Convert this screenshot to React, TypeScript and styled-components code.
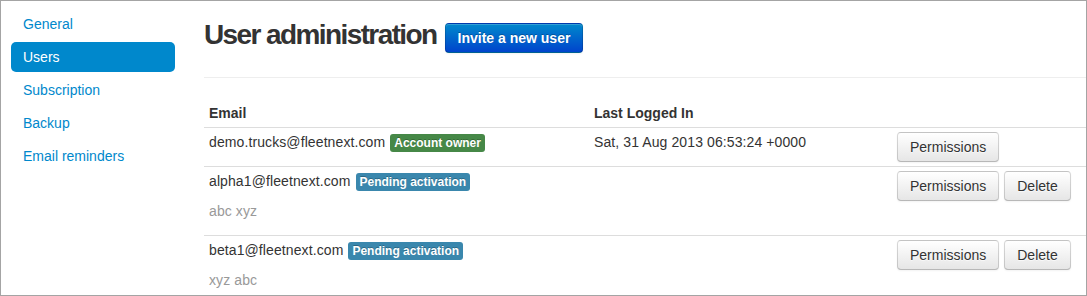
import React from 'react'
import styled, { createGlobalStyle } from 'styled-components'

const GlobalStyle = createGlobalStyle`
  body {
    margin: 0;
    background: #fff;
    font-family: "Liberation Sans", Arial, sans-serif;
    font-size: 14px;
    line-height: 20px;
    color: #333;
  }
`

const Frame = styled.div`
  width: 1087px;
  height: 296px;
  box-sizing: border-box;
  border: 1px solid #a4a4a4;
  overflow: hidden;
  display: flex;
  align-items: flex-start;
`

const Sidebar = styled.ul`
  list-style: none;
  margin: 8px 0 0 10px;
  padding: 0;
  width: 164px;
  flex-shrink: 0;
`

const NavLink = styled.a<{ $active?: boolean }>`
  display: block;
  margin-bottom: 3px;
  padding: 5px 12px;
  border-radius: 5px;
  text-decoration: none;
  color: ${p => (p.$active ? '#fff' : '#0088cc')};
  background: ${p => (p.$active ? '#0088cc' : 'transparent')};
`

const Main = styled.main`
  flex: 1;
  min-width: 0;
  margin: 14px 0 0 29px;
`

const Header = styled.div`
  display: flex;
  align-items: flex-start;
  gap: 8px;
`

const Title = styled.h1`
  margin: 0;
  font-size: 28px;
  line-height: 40px;
  font-weight: bold;
  letter-spacing: -1.6px;
  color: #333;
`

const Button = styled.button<{ $primary?: boolean }>`
  padding: 4px 12px;
  font-family: inherit;
  font-size: 14px;
  line-height: 20px;
  border-radius: 4px;
  border: 1px solid rgba(0, 0, 0, 0.15);
  border-bottom-color: rgba(0, 0, 0, 0.28);
  box-shadow: inset 0 1px 0 rgba(255, 255, 255, 0.2), 0 1px 2px rgba(0, 0, 0, 0.05);
  cursor: pointer;
  white-space: nowrap;
  letter-spacing: 0;
  font-weight: ${p => (p.$primary ? 'bold' : 'normal')};
  color: ${p => (p.$primary ? '#fff' : '#333')};
  text-shadow: ${p =>
    p.$primary ? '0 -1px 0 rgba(0, 0, 0, 0.25)' : '0 1px 1px rgba(255, 255, 255, 0.75)'};
  background: ${p =>
    p.$primary
      ? 'linear-gradient(to bottom, #0088cc, #0044cc)'
      : 'linear-gradient(to bottom, #ffffff, #e6e6e6)'};
`

const InviteButton = styled(Button)`
  margin-top: 8px;
`

const Rule = styled.hr`
  margin: 22px 0 21px;
  border: 0;
  border-top: 1px solid #eee;
`

const Table = styled.table`
  width: 100%;
  border-collapse: collapse;
  table-layout: fixed;
`

const Th = styled.th<{ $width?: number }>`
  width: ${p => (p.$width ? `${p.$width}px` : 'auto')};
  padding: 4px 5px;
  text-align: left;
  font-weight: bold;
  vertical-align: bottom;
`

const Td = styled.td`
  padding: 4px 5px;
  border-top: 1px solid #ddd;
  vertical-align: top;
  letter-spacing: 0.1px;
`

const Line = styled.p<{ $muted?: boolean }>`
  margin: 0 0 10px;
  color: ${p => (p.$muted ? '#999' : '#333')};
`

const Badge = styled.span<{ $tone: 'success' | 'info' }>`
  display: inline-block;
  margin-left: 1px;
  padding: 2px 4px;
  font-size: 12px;
  font-weight: bold;
  line-height: 14px;
  letter-spacing: 0;
  color: #fff;
  text-shadow: 0 -1px 0 rgba(0, 0, 0, 0.25);
  white-space: nowrap;
  vertical-align: baseline;
  border-radius: 3px;
  background: ${p => (p.$tone === 'success' ? '#468847' : '#3a87ad')};
`

const Actions = styled.div`
  display: flex;
  gap: 5px;
`

const nav = ['General', 'Users', 'Subscription', 'Backup', 'Email reminders']

const users = [
  {
    email: 'demo.trucks@fleetnext.com',
    badge: 'Account owner',
    tone: 'success' as const,
    lastLogin: 'Sat, 31 Aug 2013 06:53:24 +0000',
    canDelete: false
  },
  {
    email: 'alpha1@fleetnext.com',
    badge: 'Pending activation',
    tone: 'info' as const,
    note: 'abc xyz',
    canDelete: true
  },
  {
    email: 'beta1@fleetnext.com',
    badge: 'Pending activation',
    tone: 'info' as const,
    note: 'xyz abc',
    canDelete: true
  }
]

export default function App () {
  return (
    <>
      <GlobalStyle />
      <Frame>
        <Sidebar>
          {nav.map(item => (
            <li key={item}>
              <NavLink href='#' $active={item === 'Users'}>
                {item}
              </NavLink>
            </li>
          ))}
        </Sidebar>
        <Main>
          <Header>
            <Title>User administration</Title>
            <InviteButton $primary>Invite a new user</InviteButton>
          </Header>
          <Rule />
          <Table>
            <thead>
              <tr>
                <Th $width={375}>Email</Th>
                <Th $width={293}>Last Logged In</Th>
                <Th />
              </tr>
            </thead>
            <tbody>
              {users.map(u => (
                <tr key={u.email}>
                  <Td>
                    <Line>
                      {u.email} <Badge $tone={u.tone}>{u.badge}</Badge>
                    </Line>
                    {u.note && <Line $muted>{u.note}</Line>}
                  </Td>
                  <Td>{u.lastLogin}</Td>
                  <Td>
                    <Actions>
                      <Button>Permissions</Button>
                      {u.canDelete && <Button>Delete</Button>}
                    </Actions>
                  </Td>
                </tr>
              ))}
            </tbody>
          </Table>
        </Main>
      </Frame>
    </>
  )
}
